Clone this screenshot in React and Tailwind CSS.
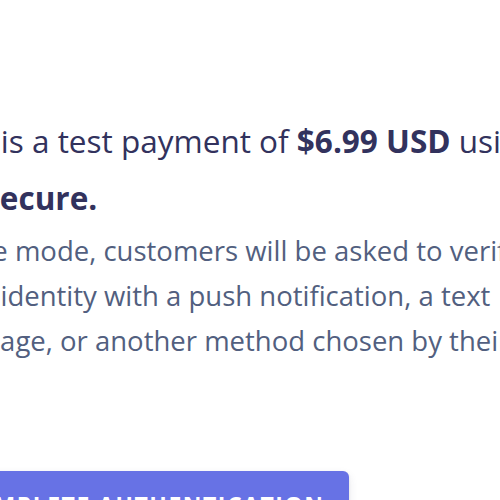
export default function App() {
  return (
    <div className="w-[500px] h-[500px] overflow-hidden bg-white" style={{ fontFamily: '"Open Sans", "Noto Sans", sans-serif' }}>
      <div className="-ml-[67px] w-[900px] pt-[112px]">
        <h1 className="text-[31.5px] leading-[57px] font-medium text-[#32325d] whitespace-nowrap">
          <span className="block">This is a test payment of <span className="font-bold">$6.99 USD</span> using</span>
          <span className="block font-bold">3D Secure.</span>
        </h1>
        <p className="mt-[2px] text-[27.5px] leading-[45px] text-[#525f7f] whitespace-nowrap">
          <span className="block">In live mode, customers will be asked to verify</span>
          <span className="block">their identity with a push notification, a text</span>
          <span className="block">message, or another method chosen by their bank.</span>
        </p>
        <button className="mt-[108px] w-[416px] h-[68px] rounded-[6px] bg-[#6772e5] text-white text-[23px] font-bold uppercase tracking-[1.5px] shadow-[0_4px_10px_rgba(50,50,93,0.11),0_1px_3px_rgba(0,0,0,0.08)] flex items-center justify-center">
          Complete authentication
        </button>
      </div>
    </div>
  );
}
